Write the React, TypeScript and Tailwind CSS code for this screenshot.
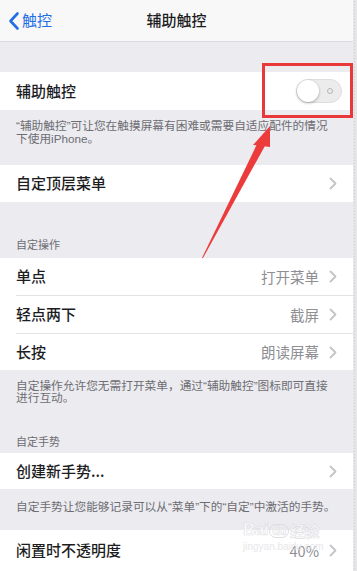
import React from "react";

const font = { fontFamily: '"Noto Sans CJK SC", "Noto Sans", sans-serif' };
const footFont = { fontFamily: '"Liberation Sans", "Noto Sans CJK SC", sans-serif' };

function Chevron() {
  return (
    <svg width="8" height="13" viewBox="0 0 8 13" className="shrink-0">
      <path d="M1.5 1.5 L6.5 6.5 L1.5 11.5" fill="none" stroke="#c4c4c8" strokeWidth="1.8" strokeLinecap="round" strokeLinejoin="round" />
    </svg>
  );
}

function Row({ label, value, h, sep }: { label: string; value?: string; h: string; sep?: boolean }) {
  return (
    <div className={`bg-white pl-4 ${h}`}>
      <div className={`flex h-full items-center pr-4 ${sep ? "border-b border-[#e3e3e6]" : ""}`}>
        <span className="flex-1 text-[15px] font-medium text-[#1d1d1f]">{label}</span>
        {value && <span className="mr-[10px] text-[14.5px] text-[#8e8e93]">{value}</span>}
        <Chevron />
      </div>
    </div>
  );
}

export default function App() {
  return (
    <div className="relative flex h-[571px] w-[357px] overflow-hidden bg-[#ebebf0]" style={font}>
      <div className="flex w-[353px] flex-col">
        {/* nav */}
        <div className="flex h-[42px] shrink-0 items-center border-b border-[#dcdce0] bg-[#f8f8f8] px-2">
          <div className="flex w-[80px] items-center text-[#1f6fe6]">
            <svg width="12" height="20" viewBox="0 0 12 20">
              <path d="M9.5 2.5 L2.5 10 L9.5 17.5" fill="none" stroke="#1f6fe6" strokeWidth="2.6" strokeLinecap="round" strokeLinejoin="round" />
            </svg>
            <span className="ml-[2px] text-[15px]">触控</span>
          </div>
          <div className="flex-1 text-center text-[15px] font-medium text-[#1d1d1f]">辅助触控</div>
          <div className="w-[80px]" />
        </div>
        <div className="h-[30px] shrink-0" />
        {/* toggle row */}
        <div className="flex h-[38px] shrink-0 items-center bg-white pl-4 pr-[11px]">
          <span className="flex-1 text-[15px] font-medium text-[#1d1d1f]">辅助触控</span>
          <div className="relative h-[24px] w-[46px] rounded-full border border-[#dedede] bg-[#ececec]">
            <div className="absolute left-[0px] top-[0px] h-[22px] w-[22px] rounded-full bg-white shadow-[0_1px_3px_rgba(0,0,0,0.3)]" />
            <div className="absolute right-[8px] top-[8px] h-[6px] w-[6px] rounded-full border border-[#b5b5b5]" />
          </div>
        </div>
        <div className="h-[55px] shrink-0 whitespace-nowrap px-4 pt-[9px] text-[11.7px] leading-[13px] text-[#6d6d72]" style={footFont}>
          “辅助触控”可让您在触摸屏幕有困难或需要自适应配件的情况
          <br />
          下使用iPhone。
        </div>
        <Row label="自定顶层菜单" h="h-[37px] shrink-0" />
        <div className="flex h-[56px] shrink-0 items-end px-4 pb-[6px] text-[11px] text-[#6d6d72]">自定操作</div>
        <Row label="单点" value="打开菜单" h="h-[38px] shrink-0" sep />
        <Row label="轻点两下" value="截屏" h="h-[38px] shrink-0" sep />
        <Row label="长按" value="朗读屏幕" h="h-[36px] shrink-0" />
        <div className="h-[41px] shrink-0 whitespace-nowrap px-4 pt-[10px] text-[11.7px] leading-[12px] text-[#6d6d72]" style={footFont}>
          自定操作允许您无需打开菜单，通过“辅助触控”图标即可直接
          <br />
          进行互动。
        </div>
        <div className="flex h-[42px] shrink-0 items-end px-4 pb-[4px] text-[11px] text-[#6d6d72]">自定手势</div>
        <Row label="创建新手势..." h="h-[36px] shrink-0" />
        <div className="h-[41px] shrink-0 whitespace-nowrap px-4 pt-[11px] text-[11.7px] leading-[13px] text-[#6d6d72]" style={footFont}>
          自定手势让您能够记录可以从“菜单”下的“自定”中激活的手势。
        </div>
        <Row label="闲置时不透明度" value="40%" h="h-[41px] shrink-0" />
      </div>
      <div className="w-[4px] bg-[#e6e6e8] [background-image:radial-gradient(#cfcfd2_0.8px,transparent_0.9px)] [background-size:3px_3px]" />

      {/* annotation overlays */}
      <div className="pointer-events-none absolute left-[262px] top-[63px] h-[55px] w-[91px] border-[3px] border-[#e8383a]" />
      <svg className="pointer-events-none absolute left-0 top-0" width="357" height="571" viewBox="0 0 357 571">
        <polygon points="202,258 258,142 266,144 203,258" fill="#ec3b3b" />
        <polygon points="270,126 253,145 270,147" fill="#ec3b3b" />
      </svg>

      {/* watermark */}
      <div className="pointer-events-none absolute left-[243px] top-[521px] flex flex-col leading-none text-white opacity-80">
        <div className="flex items-end text-[17px] font-bold tracking-tight" style={{ fontFamily: '"Liberation Sans", sans-serif', WebkitTextStroke: "0.6px #d8d8dc" }}>
          <span>Bai</span>
          <span className="ml-[1px] rounded-full border border-[#d8d8dc] px-[2px] text-[12px]">du</span>
          <span className="ml-[1px] text-[15px]" style={font}>经验</span>
        </div>
        <div className="mt-[4px] text-[10px] text-[#e2e2e6]" style={{ fontFamily: '"Liberation Sans", sans-serif' }}>jingyan.baidu.com</div>
      </div>
    </div>
  );
}
